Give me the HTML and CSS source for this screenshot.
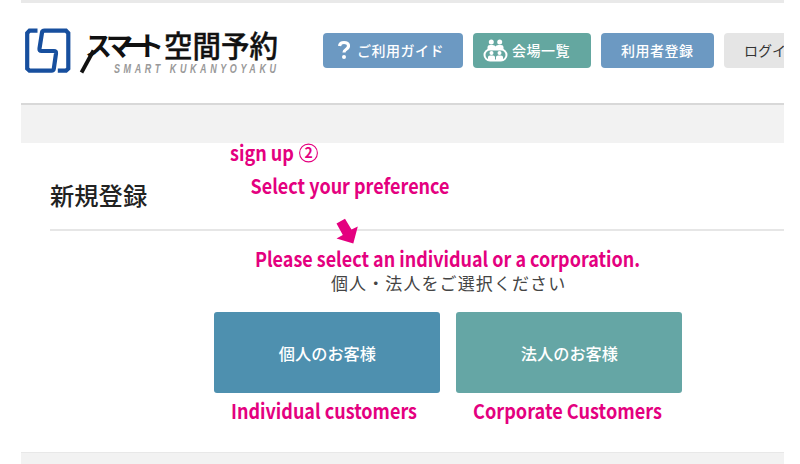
FILE: index.html
```html
<!DOCTYPE html>
<html lang="ja">
<head>
<meta charset="utf-8">
<title>新規登録</title>
<link rel="stylesheet" href="styles.css">
</head>
<body>
<div class="page">
  <header class="header">
    <svg class="logo" width="258" height="53" viewBox="0 0 258 53">
      <path d="M15.500 5.700H7.500L5.200 8V43.500L7.500 45.700H29.500Q31.500 45.700 31.800 43.700L34 28.500Q34.300 26 32 26H19.500Q17.200 26 17.500 23.500L20 7.700Q20.300 5.700 22.500 5.700H44L46.300 8V43.500L44 45.700H35.800" fill="none" stroke="#174f9e" stroke-width="4.200"/>
      <text class="logo-kana" y="31" x="63 84 101 115">スマート</text>
      <path d="M71.500 25.500L59.500 47.500" stroke="#111" stroke-width="3.800"/>
      <text class="logo-kanji" x="142" y="31.500" textLength="114" lengthAdjust="spacingAndGlyphs">空間予約</text>
      <text class="logo-sub" transform="translate(92 48) scale(.72 1)" textLength="225">SMART KUKANYOYAKU</text>
    </svg>
    <nav class="nav">
      <a class="btn guide"><svg width="12" height="20" viewBox="0 0 12 20"><path d="M1.500 6Q2 2.500 6 2.500Q10.500 2.500 10.500 6Q10.500 8 8 9.500Q6 10.700 6 12.500" fill="none" stroke="#fff" stroke-width="3.200"/><circle cx="6" cy="17" r="2" fill="#fff"/></svg><span>ご利用ガイド</span></a>
      <a class="btn venues"><svg width="25" height="23" viewBox="0 0 25 23"><g fill="#fff"><circle cx="8.300" cy="3" r="2.500"/><circle cx="16.700" cy="3" r="2.500"/><path d="M4.500 11V8Q4.500 5.900 7 5.900H9.600Q12 5.900 12.500 7.500Q13 5.900 15.400 5.900H18Q20.500 5.900 20.500 8V11Z"/></g><rect x="1.500" y="10.500" width="22" height="11" rx="5.500" fill="#64a7a0" stroke="#fff" stroke-width="2"/><g fill="#fff"><circle cx="8.500" cy="14" r="2"/><circle cx="16.500" cy="14" r="2"/><path d="M5 21V18Q5 16.500 7 16.500H10Q12 16.500 12 18V21ZM13 21V18Q13 16.500 15 16.500H18Q20 16.500 20 18V21Z"/></g></svg><span>会場一覧</span></a>
      <a class="btn register"><span>利用者登録</span></a>
      <a class="btn login"><span>ログイ</span></a>
    </nav>
  </header>
  <div class="band"></div>
  <main class="main">
    <h1>新規登録</h1>
    <p class="prompt">個人・法人をご選択ください</p>
    <div class="choices">
      <a class="choice person">個人のお客様</a>
      <a class="choice company">法人のお客様</a>
    </div>
  </main>
</div>
<svg class="notes" width="800" height="464" viewBox="0 0 800 464">
  <text x="230" y="160.500" textLength="64" lengthAdjust="spacingAndGlyphs">sign up</text>
  <circle cx="308.500" cy="153" r="8.900"/>
  <text class="num" x="304.500" y="158.200">2</text>
  <text x="250.500" y="193.500" textLength="199" lengthAdjust="spacingAndGlyphs">Select your preference</text>
  <path d="M336.500 223.500L345 218.700L351.500 229.500L357.800 226.500L353.300 243.500L336.500 238.500L342.800 235Z"/>
  <text x="255" y="267" textLength="385" lengthAdjust="spacingAndGlyphs">Please select an individual or a corporation.</text>
  <text x="231" y="419" textLength="186" lengthAdjust="spacingAndGlyphs">Individual customers</text>
  <text x="473" y="419" textLength="189" lengthAdjust="spacingAndGlyphs">Corporate Customers</text>
</svg>
</body>
</html>
```
FILE: styles.css
```css
* { box-sizing: border-box; }
body {
  margin: 0;
  width: 800px;
  height: 464px;
  overflow: hidden;
  background: #fff;
  color: #333;
  font-family: "Noto Sans CJK JP", sans-serif;
}
.page {
  width: 763px;
  height: 464px;
  margin-left: 21px;
  overflow: hidden;
  background: #f2f2f2;
}
.header {
  display: flex;
  height: 105px;
  padding-top: 22px;
  background: #fff;
  border-top: 3px solid #e9e9e9;
  border-bottom: 2px solid #d8d8d8;
}
.logo { flex: none; margin-left: 1px; }
.logo-kana { font-size: 27px; font-weight: 700; fill: #111; }
.logo-kanji { font-size: 30px; font-weight: 500; fill: #111; stroke: #111; stroke-width: 0.4; }
.logo-sub { font: italic 700 12.5px "Liberation Sans", sans-serif; fill: #999; }
.nav {
  display: flex;
  gap: 10px;
  margin: 7.5px 0 0 43px;
}
.btn {
  display: flex;
  flex: none;
  align-items: center;
  height: 35px;
  border-radius: 4px;
  color: #fff;
  font-size: 14px;
  font-weight: 500;
  letter-spacing: 0.5px;
  white-space: nowrap;
}
.guide { width: 140px; padding-left: 15px; gap: 7px; background: #6c99c2; }
.venues { width: 118px; padding-left: 10px; gap: 4px; background: #64a7a0; }
.register { width: 113px; padding-left: 20px; background: #6c99c2; }
.login { width: 60px; padding-left: 20px; border-radius: 4px 0 0 4px; background: #e5e5e5; color: #333; font-weight: 400; letter-spacing: 0; }
.band { height: 38px; }
.main {
  height: 310px;
  padding: 34px 0 0 29px;
  background: #fff;
  border-bottom: 1px solid #e8e8e8;
}
h1 {
  height: 54px;
  margin: 0;
  border-bottom: 2px solid #e6e6e6;
  color: #222;
  font-size: 24.3px;
  font-weight: 500;
  line-height: 35px;
}
.prompt {
  margin: 39px 0 0 281px;
  color: #444;
  font-size: 17px;
  line-height: 26px;
  letter-spacing: 1.1px;
}
.choices {
  display: flex;
  gap: 16px;
  margin: 16px 0 0 164.4px;
}
.choice {
  display: flex;
  align-items: center;
  justify-content: center;
  width: 226px;
  height: 81px;
  border-radius: 3px;
  color: #fff;
  font-size: 16.2px;
  font-weight: 500;
}
.person { background: #4e90af; }
.company { background: #65a6a5; }
.notes { position: absolute; left: 0; top: 0; }
.notes text { fill: #e4007f; font-size: 20.5px; font-weight: 700; }
.notes .num { font-size: 14px; }
.notes path { fill: #e4007f; }
.notes circle { fill: none; stroke: #e4007f; stroke-width: 1.1; }
```
